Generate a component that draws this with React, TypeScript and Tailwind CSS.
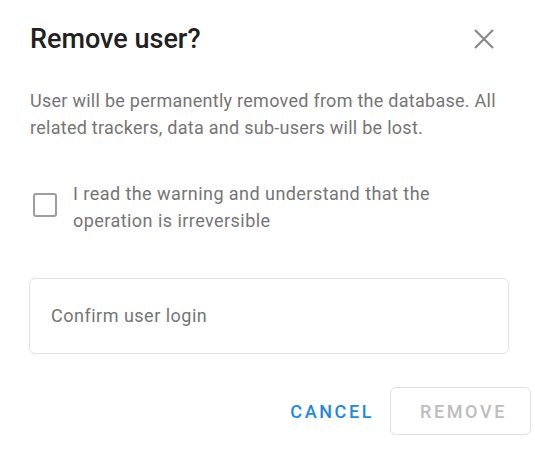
import React from "react";

export default function App() {
  return (
    <div className="w-[535px] h-[451px] bg-white font-['Roboto',sans-serif] relative">
      <div className="pl-[30px] pr-[40px] pt-[22px] flex items-start justify-between">
        <h1 className="text-[27px] leading-[34px] font-medium text-[#212121]">Remove user?</h1>
        <button className="mt-[6px] text-[#8a8a8a]">
          <svg width="22" height="22" viewBox="0 0 22 22" stroke="currentColor" strokeWidth="2.2" fill="none">
            <path d="M2 2 L20 20 M20 2 L2 20" />
          </svg>
        </button>
      </div>
      <p className="pl-[30px] pr-[30px] mt-[31px] text-[18px] tracking-[0.27px] leading-[27px] text-[#757575]">
        User will be permanently removed from the database. All related trackers, data and sub-users will be lost.
      </p>
      <div className="pl-[33px] mt-[39px] flex items-start gap-[16px]">
        <div className="mt-[13px] w-[24px] h-[24px] border-2 border-[#9e9e9e] rounded-[3px] shrink-0" />
        <span className="text-[18px] tracking-[0.45px] leading-[27px] text-[#757575]">
          I read the warning and understand that the
          <br />
          operation is irreversible
        </span>
      </div>
      <div className="ml-[29px] mr-[26px] mt-[44px] h-[76px] border border-[#e0e0e0] rounded-[6px] flex items-center pl-[21px]">
        <span className="text-[18px] tracking-[0.5px] text-[#757575] -mt-[2px]">Confirm user login</span>
      </div>
      <div className="mt-[33px] mr-[4px] flex justify-end items-center gap-[16px]">
        <button className="text-[18px] font-medium tracking-[2.6px] text-[#1e88e5] h-[48px]">CANCEL</button>
        <button className="w-[141px] h-[48px] pl-[6px] border border-[#e0e0e0] rounded-[6px] text-[18px] font-medium tracking-[2.6px] text-[#bdbdbd]">
          REMOVE
        </button>
      </div>
    </div>
  );
}
